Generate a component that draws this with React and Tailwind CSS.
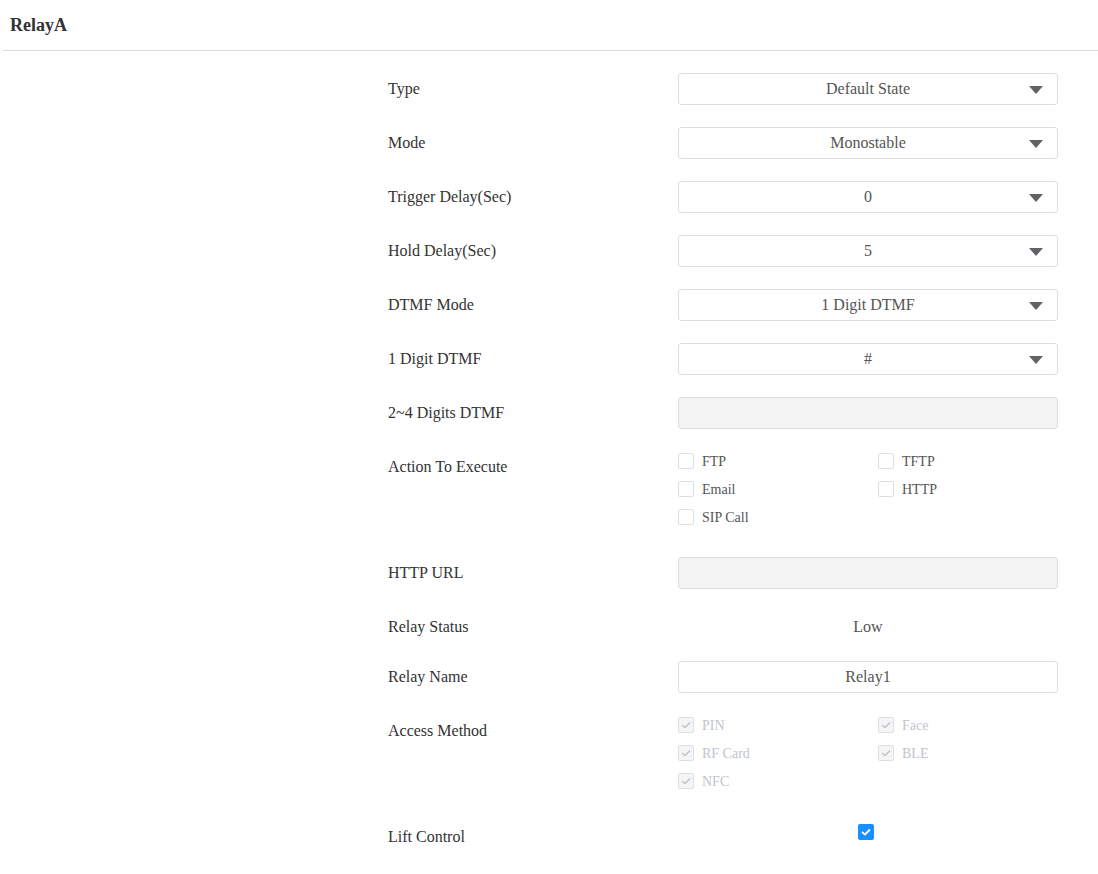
import React from 'react';

const font = { fontFamily: '"Liberation Serif", "Times New Roman", serif' };

function Caret() {
  return (
    <svg width="14" height="8" viewBox="0 0 14 8" className="absolute right-[14px] top-[12px]">
      <path d="M0 0 L14 0 L7 8 Z" fill="#606266" />
    </svg>
  );
}

function Select({ value }) {
  return (
    <div className="relative w-[380px] h-[32px] border border-[#dcdfe6] rounded-[3px] bg-white flex items-center justify-center text-[16px] text-[#555]">
      {value}
      <Caret />
    </div>
  );
}

function Input({ value, disabled }) {
  return (
    <div
      className={`w-[380px] h-[32px] border border-[#dcdfe6] rounded-[3px] flex items-center justify-center text-[16px] text-[#555] ${
        disabled ? 'bg-[#f4f4f4]' : 'bg-white'
      }`}
    >
      {value}
    </div>
  );
}

function Check({ label, checked, disabled }) {
  return (
    <div className="h-[20px] mb-[8px] flex items-center">
      <span
        className={`w-[16px] h-[16px] border rounded-[2px] flex items-center justify-center ${
          disabled ? 'border-[#dcdfe6] bg-[#f5f5f5]' : 'border-[#dcdfe6] bg-white'
        }`}
      >
        {checked && (
          <svg width="10" height="8" viewBox="0 0 10 8">
            <path d="M1 4 L4 6.5 L9 1.5" stroke="#c0c4cc" strokeWidth="1.6" fill="none" />
          </svg>
        )}
      </span>
      <span className={`ml-[8px] text-[14px] ${disabled ? 'text-[#c0c4cc]' : 'text-[#555]'}`}>{label}</span>
    </div>
  );
}

function Row({ label, children, className = '' }) {
  return (
    <div className={`flex ${className}`}>
      <div className="w-[290px] h-[32px] flex items-center text-[16px] text-[#333]">{label}</div>
      <div>{children}</div>
    </div>
  );
}

function CheckGrid({ items, checked, disabled }) {
  return (
    <div className="grid grid-cols-[200px_200px]">
      {items.map((i) => (
        <Check key={i} label={i} checked={checked} disabled={disabled} />
      ))}
    </div>
  );
}

export default function App() {
  return (
    <div className="bg-white min-h-[874px]" style={font}>
      <div className="ml-[3px] h-[51px] border-b border-[#d5dbe3] flex items-center pl-[7px]">
        <span className="text-[18px] font-bold text-[#333]">RelayA</span>
      </div>

      <div className="pl-[388px] pt-[22px]">
        <div className="flex flex-col gap-[22px]">
          <Row label="Type"><Select value="Default State" /></Row>
          <Row label="Mode"><Select value="Monostable" /></Row>
          <Row label="Trigger Delay(Sec)"><Select value="0" /></Row>
          <Row label="Hold Delay(Sec)"><Select value="5" /></Row>
          <Row label="DTMF Mode"><Select value="1 Digit DTMF" /></Row>
          <Row label="1 Digit DTMF"><Select value="#" /></Row>
          <Row label="2~4 Digits DTMF"><Input disabled /></Row>
          <Row label="Action To Execute">
            <CheckGrid items={['FTP', 'TFTP', 'Email', 'HTTP', 'SIP Call']} />
          </Row>
          <Row label="HTTP URL"><Input disabled /></Row>
          <Row label="Relay Status" className="mb-[-4px]">
            <div className="w-[380px] h-[32px] flex items-center justify-center text-[16px] text-[#555]">Low</div>
          </Row>
          <Row label="Relay Name"><Input value="Relay1" /></Row>
          <Row label="Access Method">
            <CheckGrid items={['PIN', 'Face', 'RF Card', 'BLE', 'NFC']} checked disabled />
          </Row>
          <Row label="Lift Control">
            <div className="w-[380px] h-[22px] flex items-center justify-center">
              <span className="w-[16px] h-[16px] rounded-[2px] bg-[#1890ff] flex items-center justify-center ml-[-4px]">
                <svg width="10" height="8" viewBox="0 0 10 8">
                  <path d="M1 4 L4 6.5 L9 1.5" stroke="#fff" strokeWidth="1.8" fill="none" />
                </svg>
              </span>
            </div>
          </Row>
        </div>
      </div>
    </div>
  );
}
